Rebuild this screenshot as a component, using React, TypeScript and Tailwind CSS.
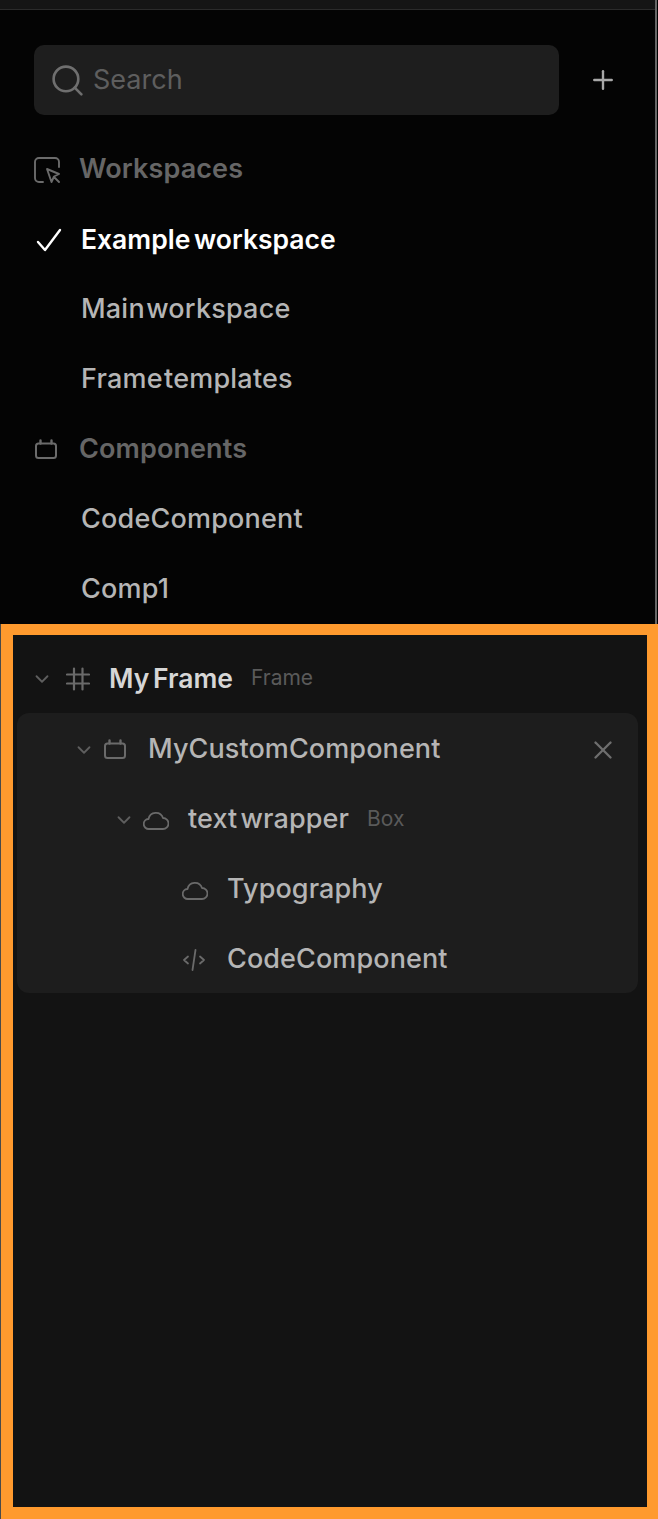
import React from 'react';
import { ChevronDown, Plus, Search, X } from 'lucide-react';

function ComponentIcon() {
  return (
    <svg width="24" height="24" viewBox="0 0 24 24" fill="none" stroke="currentColor" strokeWidth="2" strokeLinecap="round" strokeLinejoin="round">
      <rect x="2" y="5.5" width="20" height="14.5" rx="2.5" />
      <path d="M6.5 2.5v3M17.5 2.5v3" strokeWidth="2.4" />
    </svg>
  );
}

function CodeIcon() {
  return (
    <svg width="24" height="24" viewBox="0 0 24 24" fill="none" stroke="currentColor" strokeWidth="1.8" strokeLinecap="round" strokeLinejoin="round">
      <path d="M6 8.5L2 12l4 3.5M18 8.5l4 3.5-4 3.5M13.5 2l-3 20" />
    </svg>
  );
}

function CloudIcon() {
  return (
    <svg width="26" height="20" viewBox="0 0 26 20" fill="none" stroke="currentColor" strokeWidth="1.8" strokeLinecap="round" strokeLinejoin="round">
      <path d="M6 19a5 5 0 0 1-.5-10A7.5 7.5 0 0 1 20 8a5.5 5.5 0 0 1 0 11Z" />
    </svg>
  );
}

function HashIcon() {
  return (
    <svg width="24" height="24" viewBox="0 0 24 24" fill="none" stroke="currentColor" strokeWidth="2.2" strokeLinecap="round">
      <path d="M8 1.5v21M16.5 1.5v21M1 7.5h22M1 16.5h22" />
    </svg>
  );
}

function WorkspaceIcon() {
  return (
    <svg width="26" height="26" viewBox="0 0 26 26" fill="none" stroke="currentColor" strokeWidth="1.9" strokeLinecap="round" strokeLinejoin="round">
      <path d="M25 10V5a4 4 0 0 0-4-4H5a4 4 0 0 0-4 4v16a4 4 0 0 0 4 4h4" />
      <path d="M13 12l4.5 13 2.5-5.5 5-2.5ZM20 20l5 5" />
    </svg>
  );
}

function CheckIcon() {
  return (
    <svg width="26" height="24" viewBox="0 0 26 24" fill="none" stroke="currentColor" strokeWidth="2.4" strokeLinecap="round" strokeLinejoin="round">
      <path d="M2 14l7 8L24 2" />
    </svg>
  );
}

function NavHeader({ icon, label }: { icon: React.ReactNode; label: string }) {
  return (
    <div className="flex h-[70px] items-center pl-[34px]">
      <span className="flex w-[45px] shrink-0 items-center text-[#6b6b6b]">{icon}</span>
      <span className="-mt-[1px] text-[27px] font-semibold tracking-[0.1px] text-[#666]">{label}</span>
    </div>
  );
}

function NavItem({ label, active }: { label: string; active?: boolean }) {
  return (
    <div className="flex h-[70px] items-center pl-[36px]">
      <span className="flex w-[45px] shrink-0 items-center text-white">{active && <CheckIcon />}</span>
      <span className={active
        ? '-mt-[1px] text-[26.5px] font-semibold text-white [word-spacing:-3px]'
        : '-mt-[1px] text-[27px] font-medium tracking-[0.2px] text-[#b5b5b5] [word-spacing:-6px]'}
      >
        {label}
      </span>
    </div>
  );
}

function TreeRow({ indent, chevron, icon, label, tag, close }: { indent: string; chevron?: boolean; icon: React.ReactNode; label: string; tag?: string; close?: boolean }) {
  return (
    <div className={`flex h-[70px] items-center ${indent}`}>
      <span className="flex w-[30px] shrink-0 items-center text-[#5e5e5e]">
        {chevron && <ChevronDown size={22} strokeWidth={2} />}
      </span>
      <span className="flex w-[45px] shrink-0 items-center text-[#6a6a6a]">{icon}</span>
      <span className="-mt-[1px] text-[27px] font-medium tracking-[0.1px] text-[#b5b5b5] [word-spacing:-4px]">{label}</span>
      {tag && <span className="-mt-[3px] ml-[18px] text-[21px] text-[#5a5a5a]">{tag}</span>}
      {close && <X size={30} strokeWidth={1.9} className="mr-[20px] ml-auto text-[#6e6e6e]" />}
    </div>
  );
}

export default function App() {
  return (
    <div className="flex h-[1519px] w-[658px] flex-col overflow-hidden bg-black font-['Inter',sans-serif]">
      <div className="h-[624px] w-[657px] shrink-0 overflow-hidden border-r-2 border-[#666] bg-[#040404]">
        <div className="h-[10px] border-b border-[#2b2b2b] bg-[#151515]" />
        <div className="flex items-center pt-[35px] pl-[34px]">
          <div className="flex h-[70px] w-[525px] items-center gap-[7px] rounded-[10px] bg-[#1e1e1e] pl-[15px]">
            <Search size={37} strokeWidth={1.7} className="text-[#6f6f6f]" />
            <span className="text-[27px] text-[#5e5e5e]">Search</span>
          </div>
          <Plus size={30} strokeWidth={1.9} className="ml-[29px] text-[#a8a8a8]" />
        </div>
        <div className="mt-[20px]">
          <NavHeader icon={<WorkspaceIcon />} label="Workspaces" />
          <NavItem active label="Example workspace" />
          <NavItem label="Main workspace" />
          <NavItem label="Frame templates" />
          <NavHeader icon={<ComponentIcon />} label="Components" />
          <NavItem label="CodeComponent" />
          <NavItem label="Comp1" />
        </div>
      </div>
      <div className="min-h-0 flex-1 border-l border-[#4a4a4a]">
        <div className="h-full border-t-[11px] border-r-[11px] border-b-[12px] border-l-[12px] border-[#ff9a2e] bg-[#131313] pt-[9px]">
          <div className="flex h-[70px] items-center pl-[18px]">
            <span className="flex w-[35px] shrink-0 items-center text-[#5e5e5e]"><ChevronDown size={22} strokeWidth={2} /></span>
            <span className="flex w-[43px] shrink-0 items-center text-[#6a6a6a]"><HashIcon /></span>
            <span className="-mt-[1px] text-[26.5px] font-semibold text-[#d6d6d6] [word-spacing:-3px]">My Frame</span>
            <span className="-mt-[2px] ml-[18px] text-[21px] text-[#5a5a5a]">Frame</span>
          </div>
          <div className="-mt-[1px] mr-[9px] ml-[4px] h-[280px] rounded-[12px] bg-[#1d1d1d] pt-[2px]">
            <TreeRow indent="pl-[56px]" chevron icon={<ComponentIcon />} label="MyCustomComponent" close />
            <TreeRow indent="pl-[96px]" chevron icon={<CloudIcon />} label="text wrapper" tag="Box" />
            <TreeRow indent="pl-[135px]" icon={<CloudIcon />} label="Typography" />
            <TreeRow indent="pl-[135px]" icon={<CodeIcon />} label="CodeComponent" />
          </div>
        </div>
      </div>
    </div>
  );
}
